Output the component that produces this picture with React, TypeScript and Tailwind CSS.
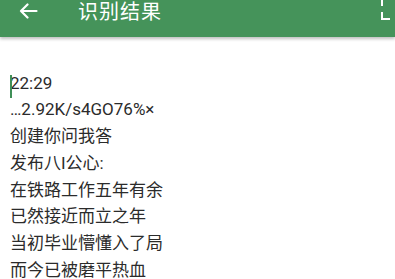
import React from "react";

const lines = [
  "22:29",
  "…2.92K/s4GO76%×",
  "创建你问我答",
  "发布八I公心:",
  "在铁路工作五年有余",
  "已然接近而立之年",
  "当初毕业懵懂入了局",
  "而今已被磨平热血",
];

export default function App() {
  return (
    <div
      className="w-[395px] h-[279px] overflow-hidden bg-white"
      style={{ fontFamily: 'Roboto, "Noto Sans CJK SC", sans-serif' }}
    >
      <div className="relative h-[37px] bg-[#45935a] shadow-[0_2px_3px_rgba(0,0,0,0.25)] flex items-start">
        <svg
          className="ml-[19px] mt-[3px]"
          width="19"
          height="16"
          viewBox="0 0 19 16"
          fill="none"
          stroke="white"
          strokeWidth="2.2"
          strokeLinecap="round"
          strokeLinejoin="round"
        >
          <path d="M17.5 8H2M8.5 1.5L2 8l6.5 6.5" />
        </svg>
        <div className="ml-[40px] -mt-[3px] text-[20px] leading-[30px] text-white tracking-[1px]">
          识别结果
        </div>
        <svg
          className="absolute left-[380px] top-0"
          width="15"
          height="22"
          viewBox="0 0 15 22"
          fill="none"
          stroke="white"
          strokeWidth="2"
        >
          <path d="M2 0V6" />
          <path d="M2 12V19H10" />
        </svg>
      </div>
      <div className="pl-[10px] pt-[32.5px] text-[17px] leading-[26.8px] text-[#2b2b2b]">
        {lines.map((l, i) => (
          <div key={i} className="relative whitespace-nowrap">
            {i === 0 && (
              <span className="absolute left-0 top-[5px] w-[2px] h-[23px] bg-[#3f8f57]" />
            )}
            {l}
          </div>
        ))}
      </div>
    </div>
  );
}
